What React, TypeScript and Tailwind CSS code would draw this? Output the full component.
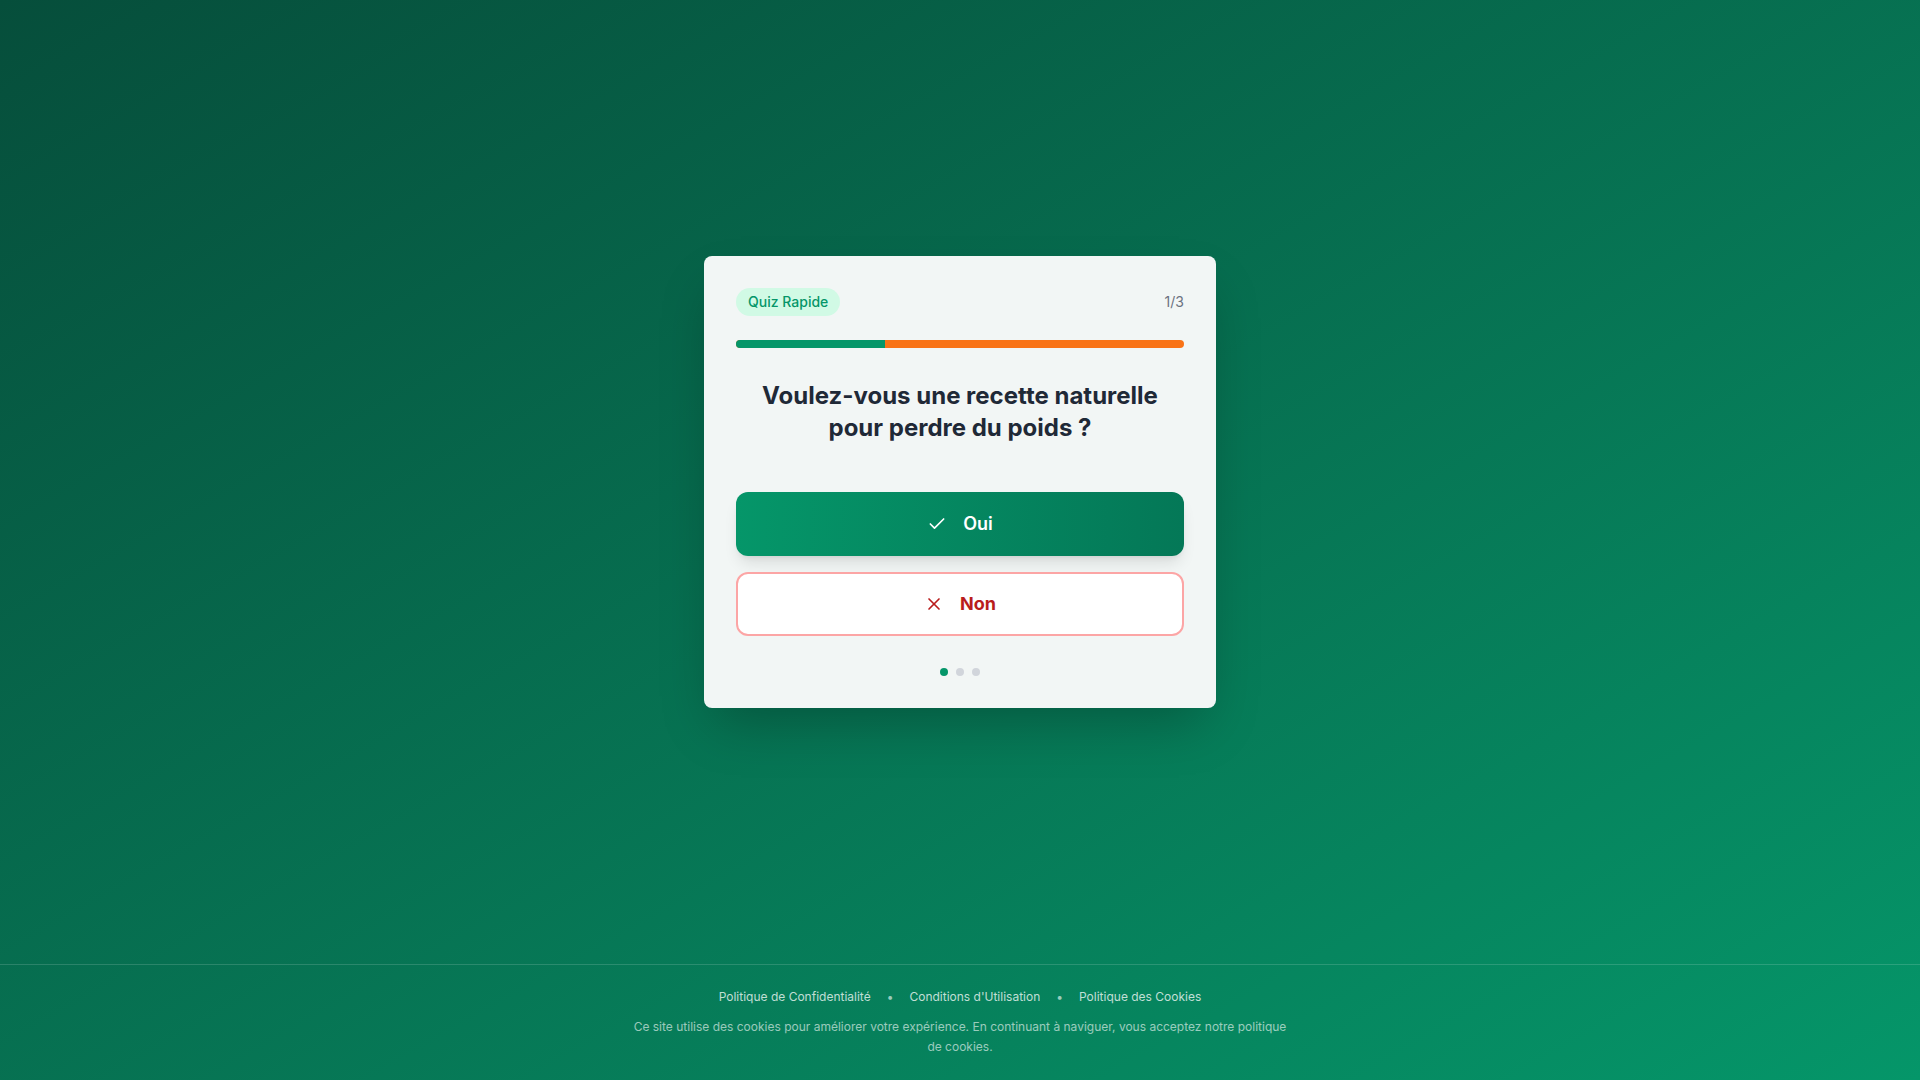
import React from "react";
import { Check, X } from "lucide-react";

export default function App() {
  return (
    <div className="min-h-screen flex flex-col bg-linear-to-br from-[#064e3b] to-[#059669] font-['Inter',sans-serif]">
      <main className="flex-1 flex items-center justify-center">
        <div className="w-[512px] rounded-lg bg-[#f2f6f5] p-8 shadow-2xl">
          <div className="flex items-center justify-between mb-6">
            <span className="rounded-full bg-[#d1fae5] px-3 py-1 text-sm font-medium leading-5 text-[#059669]">
              Quiz Rapide
            </span>
            <span className="text-sm text-[#6b7280]">1/3</span>
          </div>
          <div className="h-2 w-full rounded-full bg-[#f97316] overflow-hidden mb-8">
            <div className="h-full w-1/3 bg-[#059669]" />
          </div>
          <h2 className="mb-12 text-center text-2xl font-bold leading-8 text-[#1f2937]">
            Voulez-vous une recette naturelle
            <br />
            pour perdre du poids ?
          </h2>
          <div className="flex flex-col gap-4">
            <button className="flex h-16 w-full items-center justify-center gap-4 rounded-xl bg-linear-to-r from-[#059669] to-[#047857] text-lg font-semibold text-white shadow-lg">
              <Check className="h-5 w-5" strokeWidth={2} />
              <span>Oui</span>
            </button>
            <button className="flex h-16 w-full items-center justify-center gap-4 rounded-xl border-2 border-[#fca5a5] bg-white text-lg font-bold text-[#b91c1c]">
              <X className="h-5 w-5" strokeWidth={2} />
              <span>Non</span>
            </button>
          </div>
          <div className="mt-8 flex items-center justify-center gap-2">
            <span className="h-2 w-2 rounded-full bg-[#059669]" />
            <span className="h-2 w-2 rounded-full bg-[#d1d5db]" />
            <span className="h-2 w-2 rounded-full bg-[#d1d5db]" />
          </div>
        </div>
      </main>
      <footer className="border-t border-white/15 pt-6 pb-[23px]">
        <div className="flex items-center justify-center gap-4 text-xs leading-4 text-white/75">
          <span>Politique de Confidentialité</span>
          <span className="text-white/60">•</span>
          <span>Conditions d'Utilisation</span>
          <span className="text-white/60">•</span>
          <span>Politique des Cookies</span>
        </div>
        <p className="mx-auto mt-3 max-w-[660px] text-center text-xs leading-5 text-white/60">
          Ce site utilise des cookies pour améliorer votre expérience. En continuant à naviguer, vous acceptez notre politique de cookies.
        </p>
      </footer>
    </div>
  );
}
